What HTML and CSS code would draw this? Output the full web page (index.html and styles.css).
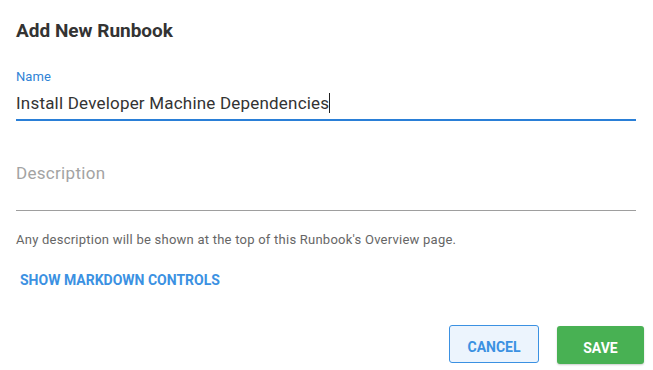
FILE: index.html
```html
<!DOCTYPE html>
<html lang="en">
<head>
<meta charset="utf-8">
<title>Add New Runbook</title>
<link rel="stylesheet" href="styles.css">
</head>
<body>
<div class="dialog">
  <h1 class="title">Add New Runbook</h1>
  <div class="field field-name">
    <label class="field-label">Name</label>
    <div class="field-input focused"><span class="value">Install Developer Machine Dependencies</span><span class="caret"></span></div>
  </div>
  <div class="field field-desc">
    <div class="field-input multiline"><span class="placeholder">Description</span></div>
  </div>
  <p class="helper">Any description will be shown at the top of this Runbook's Overview page.</p>
  <button class="link-btn">SHOW MARKDOWN CONTROLS</button>
  <div class="actions">
    <button class="btn btn-cancel">CANCEL</button>
    <button class="btn btn-save">SAVE</button>
  </div>
</div>
</body>
</html>
```

FILE: styles.css
```css
html, body {
  margin: 0;
  padding: 0;
  background: #ffffff;
  font-family: Roboto, "Noto Sans", Arial, sans-serif;
}

.dialog {
  width: 653px;
  height: 370px;
  box-sizing: border-box;
  padding: 19px 17px 0 16px;
  display: flex;
  flex-direction: column;
}

.title {
  margin: 0;
  font-size: 19px;
  line-height: 24px;
  font-weight: 700;
  color: #333333;
}

.field-name {
  margin-top: 26px;
}

.field-label {
  display: block;
  font-size: 13px;
  line-height: 16px;
  letter-spacing: 0.1px;
  color: #2f83d6;
}

.field-input {
  font-size: 17px;
  line-height: 24px;
  letter-spacing: 0.2px;
  color: #333333;
  display: flex;
  align-items: center;
}

.field-input.focused {
  margin-top: 6px;
  padding-bottom: 4px;
  border-bottom: 2px solid #2a7fd7;
}

.caret {
  display: inline-block;
  width: 1px;
  height: 20px;
  background: #222222;
  margin-left: 0;
}

.field-desc {
  margin-top: 40px;
}

.field-input.multiline {
  padding-bottom: 25px;
  border-bottom: 1px solid #9e9e9e;
}

.placeholder {
  color: #a3a3a3;
  letter-spacing: 0.3px;
}

.helper {
  margin: 21px 0 0;
  font-size: 13px;
  line-height: 16px;
  letter-spacing: 0.24px;
  color: #666666;
}

.link-btn {
  align-self: flex-start;
  margin: 22px 0 0 4px;
  padding: 0;
  border: none;
  background: none;
  font-family: inherit;
  font-size: 14px;
  line-height: 20px;
  font-weight: 700;
  color: #3b91e2;
  cursor: pointer;
}

.actions {
  margin-top: 35px;
  margin-right: -8px;
  display: flex;
  justify-content: flex-end;
  gap: 18px;
}

.btn {
  height: 38px;
  box-sizing: border-box;
  padding: 6px 0 0;
  font-family: inherit;
  font-size: 14px;
  font-weight: 700;
  border-radius: 3px;
  cursor: pointer;
}

.btn-cancel {
  width: 90px;
  border: 1px solid #3b91e2;
  background: #ecf4fd;
  color: #3b91e2;
}

.btn-save {
  width: 87px;
  margin-top: 1px;
  border: none;
  background: #48b153;
  color: #ffffff;
  box-shadow: 0 1px 2px rgba(0, 0, 0, 0.2);
}
```
